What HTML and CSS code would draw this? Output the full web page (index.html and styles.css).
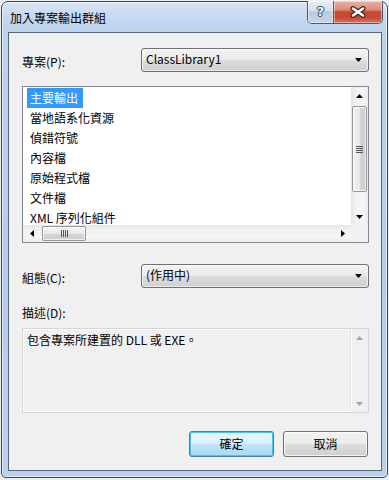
FILE: index.html
```html
<!DOCTYPE html>
<html lang="zh-Hant">
<head>
<meta charset="utf-8">
<title>加入專案輸出群組</title>
<link rel="stylesheet" href="styles.css">
</head>
<body>
<div class="window">
  <div class="titlebar">
    <div class="title">加入專案輸出群組</div>
    <div class="caption-buttons">
      <div class="cap-btn help"><span class="help-glyph">?</span></div>
      <div class="cap-btn close">
        <svg width="16" height="12" viewBox="0 0 16 12">
          <path d="M3 2.5 L13 9.5 M13 2.5 L3 9.5" stroke="#4a2520" stroke-width="5" stroke-linecap="round" fill="none"/>
          <path d="M3 2.5 L13 9.5 M13 2.5 L3 9.5" stroke="#ffffff" stroke-width="2.6" stroke-linecap="round" fill="none"/>
        </svg>
      </div>
    </div>
  </div>
  <div class="client">
    <div class="field-row row-project">
      <span class="label">專案(P):</span>
      <div class="combo">
        <span class="combo-text">ClassLibrary1</span>
        <svg class="arrow" width="7" height="4" viewBox="0 0 7 4"><path d="M0 0 H7 L3.5 4 Z" fill="#000"/></svg>
      </div>
    </div>

    <div class="listbox">
      <ul class="list-items">
        <li><span class="item selected">主要輸出</span></li>
        <li><span class="item">當地語系化資源</span></li>
        <li><span class="item">偵錯符號</span></li>
        <li><span class="item">內容檔</span></li>
        <li><span class="item">原始程式檔</span></li>
        <li><span class="item">文件檔</span></li>
        <li><span class="item">XML 序列化組件</span></li>
      </ul>
      <div class="vscroll">
        <div class="sb-btn"><svg width="7" height="4" viewBox="0 0 7 4"><path d="M0 4 H7 L3.5 0 Z" fill="#000"/></svg></div>
        <div class="sb-track-v">
          <div class="thumb-v">
            <svg width="7" height="7" viewBox="0 0 7 7"><path d="M0 0.5 H7 M0 2.5 H7 M0 4.5 H7 M0 6.5 H7" stroke="#555" stroke-width="1"/></svg>
          </div>
        </div>
        <div class="sb-btn"><svg width="7" height="4" viewBox="0 0 7 4"><path d="M0 0 H7 L3.5 4 Z" fill="#000"/></svg></div>
      </div>
      <div class="hscroll">
        <div class="sb-btn"><svg width="4" height="7" viewBox="0 0 4 7"><path d="M4 0 V7 L0 3.5 Z" fill="#000"/></svg></div>
        <div class="sb-track-h">
          <div class="thumb-h">
            <svg width="7" height="7" viewBox="0 0 7 7"><path d="M0.5 0 V7 M2.5 0 V7 M4.5 0 V7 M6.5 0 V7" stroke="#555" stroke-width="1"/></svg>
          </div>
        </div>
        <div class="sb-btn"><svg width="4" height="7" viewBox="0 0 4 7"><path d="M0 0 V7 L4 3.5 Z" fill="#000"/></svg></div>
      </div>
      <div class="sb-corner"></div>
    </div>

    <div class="field-row row-config">
      <span class="label">組態(C):</span>
      <div class="combo">
        <span class="combo-text">(作用中)</span>
        <svg class="arrow" width="7" height="4" viewBox="0 0 7 4"><path d="M0 0 H7 L3.5 4 Z" fill="#000"/></svg>
      </div>
    </div>

    <div class="label label-desc">描述(D):</div>
    <div class="desc-box">
      <div class="desc-text">包含專案所建置的 DLL 或 EXE。</div>
      <div class="vscroll disabled">
        <div class="sb-btn"><svg width="7" height="4" viewBox="0 0 7 4"><path d="M0 4 H7 L3.5 0 Z" fill="#a3a3a3"/></svg></div>
        <div class="sb-track-v"></div>
        <div class="sb-btn"><svg width="7" height="4" viewBox="0 0 7 4"><path d="M0 0 H7 L3.5 4 Z" fill="#a3a3a3"/></svg></div>
      </div>
    </div>

    <div class="button-row">
      <div class="btn default">確定</div>
      <div class="btn">取消</div>
    </div>
  </div>
</div>
</body>
</html>
```

FILE: styles.css
```css
html, body {
  margin: 0;
  padding: 0;
}

body {
  width: 389px;
  height: 480px;
  background: #eef0f3;
  font-family: "Noto Sans CJK TC", "Noto Sans", sans-serif;
  font-size: 12px;
  color: #000;
  overflow: hidden;
}

.window {
  box-sizing: border-box;
  width: 387px;
  height: 477px;
  margin: 1px 0 0 1px;
  border: 1px solid #3a4757;
  border-radius: 7px 7px 5px 5px;
  background: linear-gradient(180deg, #dbe7f5 0px, #c7daf0 12px, #bcd3ee 30px, #b4cdeb 60%, #bad2ee 100%);
  box-shadow: inset 0 0 0 1px rgba(255, 255, 255, 0.55);
  display: flex;
  flex-direction: column;
}

.titlebar {
  height: 30px;
  display: flex;
  justify-content: space-between;
  align-items: flex-start;
  flex-shrink: 0;
}

.title {
  padding: 8px 0 0 8px;
  line-height: 16px;
  font-size: 12px;
  color: #000;
}

.caption-buttons {
  display: flex;
  margin: -1px 4px 0 0;
  height: 23px;
  border: 1px solid #4b5a6c;
  border-top: none;
  border-radius: 0 0 5px 5px;
  overflow: hidden;
  box-sizing: border-box;
}

.cap-btn {
  display: flex;
  align-items: center;
  justify-content: center;
  height: 100%;
  box-shadow: inset 0 0 0 1px rgba(255, 255, 255, 0.45);
}

.cap-btn.help {
  width: 25px;
  border-right: 1px solid #4b5a6c;
  background: linear-gradient(180deg, #e6eef7 0%, #d2dfec 45%, #b9cadd 50%, #c7d6e6 100%);
}

.help-glyph {
  font-family: "DejaVu Sans", sans-serif;
  font-weight: bold;
  font-size: 13px;
  line-height: 13px;
  color: #fff;
  text-shadow: 0 0 1px #3a4250, 1px 0 0 #3a4250, -1px 0 0 #3a4250, 0 1px 0 #3a4250, 0 -1px 0 #3a4250;
  margin-top: -1px;
}

.cap-btn.close {
  width: 48px;
  background: linear-gradient(180deg, #eab3a6 0%, #dc8a78 40%, #c9452f 50%, #c44b37 75%, #d6735e 100%);
}

.client {
  flex: 1;
  margin: 0 5px 6px 6px;
  border: 1px solid #56677a;
  background: #f0f0f0;
  padding: 15px 12px 0 13px;
  display: flex;
  flex-direction: column;
}

.field-row {
  display: flex;
  align-items: center;
  justify-content: space-between;
  height: 24px;
}

.label {
  line-height: 16px;
  padding-top: 3px;
}

.combo {
  box-sizing: border-box;
  width: 228px;
  height: 24px;
  border: 1px solid #707070;
  border-radius: 3px;
  background: linear-gradient(180deg, #f2f2f2 0%, #ebebeb 48%, #dddddd 52%, #cfcfcf 100%);
  box-shadow: inset 0 0 0 1px rgba(255, 255, 255, 0.6);
  display: flex;
  align-items: center;
  justify-content: space-between;
  padding: 0 6px 0 4px;
}

.combo-text {
  line-height: 16px;
  margin-top: -2px;
}

.listbox {
  box-sizing: border-box;
  margin-top: 14px;
  height: 157px;
  border: 1px solid #828790;
  background: #fff;
  display: grid;
  grid-template-columns: 1fr 17px;
  grid-template-rows: 1fr 17px;
}

.list-items {
  list-style: none;
  margin: 0;
  padding: 1px 0 0 4px;
  overflow: hidden;
}

.list-items li {
  height: 20px;
  line-height: 20px;
  white-space: nowrap;
}

.item {
  display: inline-block;
  padding: 0 5px 0 3px;
}

.item.selected {
  background: #3399ff;
  color: #fff;
}

.vscroll {
  display: flex;
  flex-direction: column;
  background: linear-gradient(90deg, #e4e4e4 0%, #f2f2f2 30%, #f5f5f5 70%, #ececec 100%);
}

.sb-btn {
  flex: 0 0 17px;
  height: 17px;
  display: flex;
  align-items: center;
  justify-content: center;
}

.sb-track-v {
  flex: 1;
  display: flex;
  flex-direction: column;
}

.thumb-v {
  box-sizing: border-box;
  margin: 2px 1px 0 1px;
  height: 86px;
  border: 1px solid #979797;
  border-radius: 2px;
  background: linear-gradient(90deg, #f4f4f4 0%, #e8e8e8 50%, #d6d6d6 51%, #cdcdcd 100%);
  box-shadow: inset 0 0 0 1px rgba(255, 255, 255, 0.7);
  display: flex;
  align-items: center;
  justify-content: center;
}

.hscroll {
  display: flex;
  background: linear-gradient(180deg, #e4e4e4 0%, #f2f2f2 30%, #f5f5f5 70%, #ececec 100%);
}

.sb-track-h {
  flex: 1;
  display: flex;
  align-items: stretch;
}

.thumb-h {
  box-sizing: border-box;
  margin: 1px 0 1px 2px;
  width: 44px;
  border: 1px solid #979797;
  border-radius: 2px;
  background: linear-gradient(180deg, #f4f4f4 0%, #e8e8e8 50%, #d6d6d6 51%, #cdcdcd 100%);
  box-shadow: inset 0 0 0 1px rgba(255, 255, 255, 0.7);
  display: flex;
  align-items: center;
  justify-content: center;
}

.sb-corner {
  background: #f0f0f0;
}

.row-config {
  margin-top: 21px;
}

.label-desc {
  margin-top: 14px;
}

.desc-box {
  box-sizing: border-box;
  margin-top: 7px;
  height: 85px;
  border: 1px solid #d5d5d5;
  box-shadow: inset 0 0 0 1px #fbfbfb;
  background: #f0f0f0;
  display: flex;
}

.desc-text {
  flex: 1;
  padding: 3px 0 0 4px;
  line-height: 16px;
}

.vscroll.disabled {
  width: 17px;
  background: #f0f0f0;
  border-left: 1px solid #e3e3e3;
  box-shadow: inset 1px 0 0 #fafafa;
}

.button-row {
  display: flex;
  justify-content: flex-end;
  gap: 9px;
  margin-top: 18px;
  padding-right: 1px;
}

.btn {
  box-sizing: border-box;
  width: 85px;
  height: 26px;
  border: 1px solid #707070;
  border-radius: 3px;
  background: linear-gradient(180deg, #f2f2f2 0%, #ebebeb 48%, #dddddd 52%, #cfcfcf 100%);
  box-shadow: inset 0 0 0 1px rgba(255, 255, 255, 0.7);
  display: flex;
  align-items: center;
  justify-content: center;
  line-height: 16px;
}

.btn.default {
  border-color: #3c7fb1;
  background: linear-gradient(180deg, #eaf6fd 0%, #d9f0fc 48%, #bee6fd 52%, #a7d9f5 100%);
  box-shadow: inset 0 0 0 1px #48c4f2;
}
```
